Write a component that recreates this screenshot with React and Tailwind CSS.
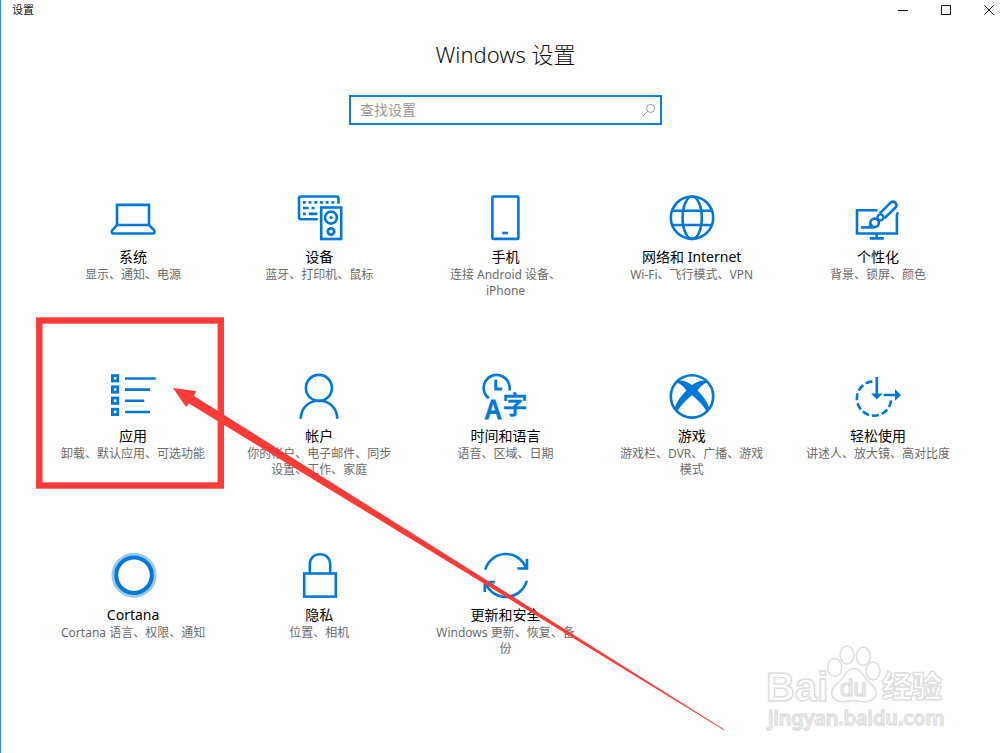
import React, { useState } from 'react';

const iconProps = {
    viewBox: "0 0 48 48",
    className: "w-12 h-12 shrink-0 overflow-visible",
    fill: "none",
    stroke: "#0078d7",
    strokeWidth: 2.6,
    "aria-hidden": true,
};

const SystemIcon = () => (
    <svg {...iconProps}>
        <path d="M8 31V10.9H40V31" />
        <path d="M8 31H40L45 36.2Q46 37.5 45.4 38.6Q45 39.5 44 39.5H4.4Q3.3 39.5 2.9 38.6Q2.4 37.5 3.3 36.2Z" />
    </svg>
);

const DevicesIcon = () => (
    <svg {...iconProps}>
        <path d="M43.5 9.7V4.5Q43.5 2.5 41.5 2.5H6Q4 2.5 4 4.5V23Q4 25.2 6 25.2H22.7" />
        <path strokeWidth="2.7" strokeDasharray="2.7 3" d="M8 8.4H39.5" />
        <path strokeWidth="2.7" d="M8 14H13.7M16.5 14H19.5M8 19.8H10.8M13.7 19.8H22.3" />
        <rect x="26.2" y="13.5" width="20" height="31.5" />
        <circle cx="36" cy="23.6" r="6" />
        <circle cx="36" cy="23.6" r="1.6" fill="#0078d7" stroke="none" />
        <circle cx="36" cy="37.6" r="3.2" strokeWidth="2.8" />
    </svg>
);

const PhoneIcon = () => (
    <svg {...iconProps}>
        <rect x="11.4" y="2.5" width="26" height="42.4" rx="1" />
        <path d="M21.3 39H26.9" />
    </svg>
);

const GlobeIcon = () => (
    <svg {...iconProps}>
        <circle cx="24" cy="23.7" r="21.2" />
        <ellipse cx="24.2" cy="23.7" rx="9.6" ry="21.2" />
        <path d="M4 16.7H44M4 31H44" />
    </svg>
);

const PersonalizeIcon = () => (
    <svg {...iconProps}>
        <path d="M23.4 16.3H3V39.5H42.9V20.5L44 18.4M22.7 39.5V44.3M15.8 44.4H29.8" />
        <path d="M25.8 19.4L36.8 8.4Q39.2 6.8 41.5 8.8Q43.4 11 41.7 13.3L30.4 24.4" />
        <circle cx="26.4" cy="23.4" r="3" strokeWidth="2.4" />
        <circle cx="20.6" cy="28.8" r="4.2" />
        <path d="M7 33.4H20.6" />
        <path fill="#0078d7" stroke="none" d="M15.6 28.6C15.4 31 14.6 32.6 13 33.4L18 34L19 31Z" />
    </svg>
);

const AppsIcon = () => (
    <svg {...iconProps}>
        {[5.3, 16.5, 27.7, 38.9].map(y => (
            <rect key={y} x="3.4" y={y - 2.7} width="5.4" height="5.4" strokeWidth="2.8" />
        ))}
        <path d="M16 5.5H46.7M16 16.6H41M16 27.8H35.3M16 39H41" />
    </svg>
);

const AccountsIcon = () => (
    <svg {...iconProps}>
        <circle cx="23.9" cy="14.9" r="13" />
        <path d="M5.7 45.7C6.2 34.8 13.6 27.8 24 27.8S41.8 34.8 42.3 45.7" />
    </svg>
);

const LanguageIcon = () => (
    <svg {...iconProps}>
        <path d="M28.4 17.5A13 13 0 1 0 7.8 25.3" />
        <path strokeWidth="3" d="M14.8 6.7V16.1H21.2" />
        <text x="4" y="45.7" fontSize="26" fontWeight="500" fontFamily="'Noto Sans CJK SC', sans-serif" fill="#0078d7" stroke="#0078d7" strokeWidth="0.8">A</text>
        <text x="21.5" y="41.3" fontSize="25" fontWeight="500" fontFamily="'Noto Sans CJK SC', sans-serif" fill="#0078d7" stroke="#0078d7" strokeWidth="0.5">字</text>
    </svg>
);

const XboxIcon = () => (
    <svg {...iconProps}>
        <circle cx="24" cy="23.4" r="21.2" />
        <path
            fill="#0078d7"
            stroke="none"
            d="M8 8.5C12.5 5.8 19 8.6 24 12C29 8.6 35.5 5.8 40 8.5L39.5 9.8C36.5 9.6 32.6 13.6 29.6 17.4C36.5 24.5 41.5 32 41.2 36.5L38.5 39.4C37.5 34.5 30.5 27.3 24 22.2C17.5 27.3 10.5 34.5 9.5 39.4L6.8 36.5C6.5 32 11.5 24.5 18.4 17.4C15.4 13.6 11.5 9.6 8.5 9.8Z"
        />
    </svg>
);

const EaseIcon = () => (
    <svg {...iconProps}>
        <path strokeDasharray="7 3" d="M18.4 8.4A17.2 17.2 0 1 0 37.2 26.6" />
        <path d="M22.8 4V23M29.8 22H44" />
        <path fill="#0078d7" stroke="none" d="M17 20.4H28.6L22.8 26.6ZM41 16.2L47 22L41 27.8Z" />
    </svg>
);

const CortanaIcon = () => (
    <svg {...iconProps}>
        <circle cx="25" cy="23.2" r="21" stroke="#99c9ef" strokeWidth="3" />
        <circle cx="25" cy="23.2" r="17.8" strokeWidth="4" />
    </svg>
);

const PrivacyIcon = () => (
    <svg {...iconProps}>
        <rect x="9.2" y="21.5" width="31.6" height="23.1" />
        <path d="M14.8 21.5V12.5C14.8 6.4 18.8 2.3 25 2.3S35.2 6.4 35.2 12.5V21.5" />
    </svg>
);

const UpdateIcon = () => (
    <svg {...iconProps}>
        <path d="M4.2 17.7C10.5-2.5 37-3.5 45 16M46 6.7V16.5H36.5" />
        <path d="M45.8 28.9C39.5 49.5 12.5 50.5 4 30.6M3.8 40V30.1H13.8" />
    </svg>
);

const CATEGORIES = [
    { id: "system", label: "系统", detail: "显示、通知、电源", icon: SystemIcon },
    { id: "devices", label: "设备", detail: "蓝牙、打印机、鼠标", icon: DevicesIcon },
    { id: "phone", label: "手机", detail: "连接 Android 设备、iPhone", icon: PhoneIcon },
    { id: "network", label: "网络和 Internet", detail: "Wi-Fi、飞行模式、VPN", icon: GlobeIcon },
    { id: "personalization", label: "个性化", detail: "背景、锁屏、颜色", icon: PersonalizeIcon },
    { id: "apps", label: "应用", detail: "卸载、默认应用、可选功能", icon: AppsIcon },
    { id: "accounts", label: "帐户", detail: "你的帐户、电子邮件、同步设置、工作、家庭", icon: AccountsIcon },
    { id: "language", label: "时间和语言", detail: "语音、区域、日期", icon: LanguageIcon },
    { id: "gaming", label: "游戏", detail: "游戏栏、DVR、广播、游戏模式", icon: XboxIcon },
    { id: "ease", label: "轻松使用", detail: "讲述人、放大镜、高对比度", icon: EaseIcon },
    { id: "cortana", label: "Cortana", detail: "Cortana 语言、权限、通知", icon: CortanaIcon },
    { id: "privacy", label: "隐私", detail: "位置、相机", icon: PrivacyIcon },
    { id: "update", label: "更新和安全", detail: "Windows 更新、恢复、备份", icon: UpdateIcon },
];

const TitleBar = () => (
    <header className="flex h-5 items-center justify-between pl-[11px]">
        <span className="text-[11px] leading-5">设置</span>
        <div className="flex gap-[21px]">
            <button type="button" aria-label="最小化" className="flex h-5 w-[22px] items-center justify-center">
                <svg viewBox="0 0 10 10" className="w-2.5 h-2.5" stroke="#111" fill="none"><path d="M0 5.5H10" /></svg>
            </button>
            <button type="button" aria-label="最大化" className="flex h-5 w-[22px] items-center justify-center">
                <svg viewBox="0 0 10 10" className="w-2.5 h-2.5" stroke="#111" fill="none"><path d="M.5 .5H9.5V9.5H.5Z" /></svg>
            </button>
            <button type="button" aria-label="关闭" className="flex h-5 w-[22px] items-center justify-center">
                <svg viewBox="0 0 10 10" className="w-2.5 h-2.5" stroke="#111" fill="none"><path d="M.3 .3L9.7 9.7M9.7 .3L.3 9.7" /></svg>
            </button>
        </div>
    </header>
);

const SearchBox = () => {
    const [query, setQuery] = useState("");

    return (
        <form
            role="search"
            className="mx-auto mt-[25px] flex h-[30px] w-[313px] items-center border-2 border-[#0e7fda] pl-[9px] pr-1"
            onSubmit={e => e.preventDefault()}
        >
            <input
                type="text"
                aria-label="查找设置"
                placeholder="查找设置"
                value={query}
                onChange={e => setQuery(e.target.value)}
                className="min-w-0 flex-1 pb-px text-sm leading-5 outline-none placeholder:text-[#999]"
            />
            <button type="submit" aria-label="搜索">
                <svg viewBox="0 0 14 14" className="w-3.5 h-3.5" fill="none" stroke="#999">
                    <circle cx="8.6" cy="5.4" r="4" />
                    <path d="M5.6 8.4L1 13" />
                </svg>
            </button>
        </form>
    );
};

const Category = ({ id, label, detail, icon: Icon }) => (
    <a href={`#${id}`} className="flex flex-col items-center text-center">
        <Icon />
        <span className="mt-1.5 text-sm leading-[18px] text-black">{label}</span>
        <span className="mt-px w-[150px] text-xs leading-4 text-[#6b6b6b]">{detail}</span>
    </a>
);

// Red frame round "应用" and the arrow pointing at it
const Annotation = () => (
    <svg className="pointer-events-none absolute -left-px top-0" width="760" height="753" viewBox="0 0 760 753" aria-hidden="true">
        <rect x="39.3" y="320.5" width="181.5" height="165" fill="none" stroke="#fc3a38" strokeWidth="6.4" />
        <path fill="#fc3a38" d="M173 388L196 391L194 396L724.3 729.6L724 730.2L189 403.5L186 407Z" />
    </svg>
);

const Watermark = () => (
    <svg
        className="pointer-events-none absolute left-[759px] top-[640px]"
        width="200"
        height="100"
        viewBox="0 0 200 100"
        fill="#fff"
        stroke="#dedede"
        strokeWidth="1.5"
        fontFamily="'Liberation Sans', 'Noto Sans CJK SC', sans-serif"
    >
        <text x="6" y="61" fontSize="40" fontWeight="700">Bai</text>
        <ellipse cx="74.7" cy="27.5" rx="7" ry="9" />
        <ellipse cx="87" cy="15" rx="7" ry="9" />
        <ellipse cx="103.3" cy="16.3" rx="7" ry="9" />
        <ellipse cx="113" cy="31" rx="7" ry="9" />
        <path d="M94 28.5C101 28.5 103 36 108 41C113 46 117.5 49 116 55C114 62 107 62 102 61.5C97 60.5 91 60.5 86 61.5C81 62 74 62 72 55C70.5 49 75 45 80 41C85 36 87 28.500 94 28.5Z" />
        <text x="80" y="56" fontSize="24">du</text>
        <text x="122" y="57" fontSize="30" fontWeight="900">经验</text>
        <text x="8" y="85" fontSize="20" fontWeight="500" fontFamily="'Noto Sans', sans-serif">jingyan.baidu.com</text>
    </svg>
);

const App = () => (
    <div className="relative min-h-screen overflow-hidden border-l border-[#2f8fe0] bg-white font-['Noto_Sans','Noto_Sans_CJK_SC',sans-serif] text-[#111]">
        <TitleBar />

        <main className="pl-[39px] pr-[29px]">
            <h1 className="mt-[18px] text-center text-[22px] font-light leading-8">Windows 设置</h1>
            <SearchBox />

            {/* CATEGORIES */}
            <nav aria-label="设置类别" className="mt-[69px] grid grid-cols-5 gap-y-[74px]">
                {CATEGORIES.map(category => (
                    <Category key={category.id} {...category} />
                ))}
            </nav>
        </main>

        <Annotation />
        <Watermark />
    </div>
);

export default App;
